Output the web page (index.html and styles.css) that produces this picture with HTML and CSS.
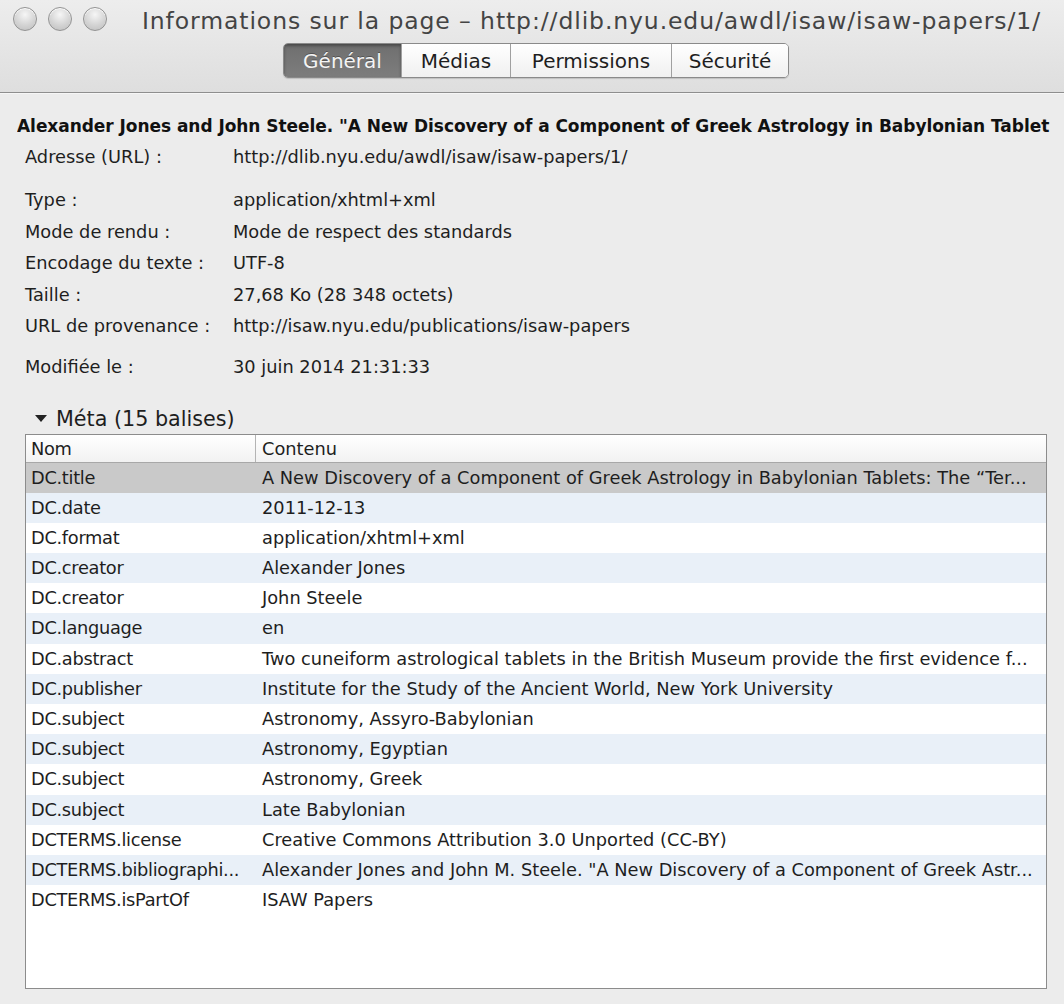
FILE: index.html
```html
<!DOCTYPE html>
<html lang="fr">
<head>
<meta charset="utf-8">
<title>Informations sur la page</title>
<link rel="stylesheet" href="styles.css">
</head>
<body>
<div class="window">
  <header class="titlebar">
    <div class="titlerow">
      <div class="lights">
        <span class="light"></span><span class="light"></span><span class="light"></span>
      </div>
      <div class="wintitle">Informations sur la page – http://dlib.nyu.edu/awdl/isaw/isaw-papers/1/</div>
    </div>
    <nav class="tabs">
      <span class="tab active">Général</span><span class="tab">Médias</span><span class="tab">Permissions</span><span class="tab">Sécurité</span>
    </nav>
  </header>
  <main class="content">
    <h1 class="pagetitle">Alexander Jones and John Steele. "A New Discovery of a Component of Greek Astrology in Babylonian Tablet</h1>
    <div class="info first">
      <span class="lbl">Adresse (URL) :</span><span class="val">http://dlib.nyu.edu/awdl/isaw/isaw-papers/1/</span>
    </div>
    <div class="info group">
      <span class="lbl">Type :</span><span class="val">application/xhtml+xml</span>
      <span class="lbl">Mode de rendu :</span><span class="val">Mode de respect des standards</span>
      <span class="lbl">Encodage du texte :</span><span class="val">UTF-8</span>
      <span class="lbl">Taille :</span><span class="val">27,68 Ko (28 348 octets)</span>
      <span class="lbl">URL de provenance :</span><span class="val">http://isaw.nyu.edu/publications/isaw-papers</span>
    </div>
    <div class="info last">
      <span class="lbl">Modifiée le :</span><span class="val">30 juin 2014 21:31:33</span>
    </div>
    <div class="meta-head"><span class="tri"></span>Méta (15 balises)</div>
    <div class="table">
      <div class="thead"><span class="th c1">Nom</span><span class="th c2">Contenu</span></div>
      <div class="tr sel"><span class="c1">DC.title</span><span class="c2">A New Discovery of a Component of Greek Astrology in Babylonian Tablets: The “Ter...</span></div>
      <div class="tr alt"><span class="c1">DC.date</span><span class="c2">2011-12-13</span></div>
      <div class="tr"><span class="c1">DC.format</span><span class="c2">application/xhtml+xml</span></div>
      <div class="tr alt"><span class="c1">DC.creator</span><span class="c2">Alexander Jones</span></div>
      <div class="tr"><span class="c1">DC.creator</span><span class="c2">John Steele</span></div>
      <div class="tr alt"><span class="c1">DC.language</span><span class="c2">en</span></div>
      <div class="tr"><span class="c1">DC.abstract</span><span class="c2">Two cuneiform astrological tablets in the British Museum provide the first evidence f...</span></div>
      <div class="tr alt"><span class="c1">DC.publisher</span><span class="c2">Institute for the Study of the Ancient World, New York University</span></div>
      <div class="tr"><span class="c1">DC.subject</span><span class="c2">Astronomy, Assyro-Babylonian</span></div>
      <div class="tr alt"><span class="c1">DC.subject</span><span class="c2">Astronomy, Egyptian</span></div>
      <div class="tr"><span class="c1">DC.subject</span><span class="c2">Astronomy, Greek</span></div>
      <div class="tr alt"><span class="c1">DC.subject</span><span class="c2">Late Babylonian</span></div>
      <div class="tr"><span class="c1">DCTERMS.license</span><span class="c2">Creative Commons Attribution 3.0 Unported (CC-BY)</span></div>
      <div class="tr alt"><span class="c1">DCTERMS.bibliographi...</span><span class="c2">Alexander Jones and John M. Steele. "A New Discovery of a Component of Greek Astr...</span></div>
      <div class="tr"><span class="c1">DCTERMS.isPartOf</span><span class="c2">ISAW Papers</span></div>
    </div>
  </main>
</div>
</body>
</html>
```

FILE: styles.css
```css
* { box-sizing: border-box; }
html, body { margin: 0; padding: 0; }
body {
  background: #ececec;
  font-family: "DejaVu Sans", "Liberation Sans", sans-serif;
  color: #1e1e1e;
  width: 1064px;
  height: 1004px;
  overflow: hidden;
}
.window { width: 1064px; height: 1004px; background: #ececec; }

.titlebar {
  height: 93px;
  background: linear-gradient(#ededed, #dedede);
  border-bottom: 1px solid #8e8e8e;
  box-shadow: 0 1px 0 #f6f6f6;
}
.titlerow { display: flex; align-items: center; height: 37px; padding-left: 13px; }
.lights { display: flex; gap: 11px; }
.light {
  width: 24px; height: 24px; border-radius: 50%;
  background: radial-gradient(circle at 50% 30%, #f6f6f6 0%, #d4d4d4 55%, #bcbcbc 100%);
  border: 1px solid #939393;
  box-shadow: inset 0 1px 1px #fff;
}
.wintitle {
  margin-left: 35px;
  font-size: 23.5px;
  color: #444;
  white-space: nowrap;
  letter-spacing: 0.9px;
  position: relative;
  top: 2px;
}
.tabs {
  display: flex;
  width: 506px;
  margin: 6px 0 0 283px;
  height: 35px;
  border: 1px solid #8a8a8a;
  border-radius: 5px;
  overflow: hidden;
  box-shadow: 0 1px 1px rgba(0,0,0,0.15);
}
.tab {
  display: flex; align-items: center; justify-content: center;
  font-size: 20px;
  color: #1e1e1e;
  background: linear-gradient(#ffffff, #f0f0f0);
  border-left: 1px solid #a0a0a0;
}
.tab:nth-child(1) { width: 117px; border-left: 0; }
.tab:nth-child(2) { width: 109px; }
.tab:nth-child(3) { width: 161px; }
.tab:nth-child(4) { flex: 1; }
.tab.active {
  background: linear-gradient(#6f6f6f, #7d7d7d);
  color: #f4f4f4;
  box-shadow: inset 0 2px 3px rgba(0,0,0,0.35);
  text-shadow: 0 -1px 0 rgba(0,0,0,0.3);
}

.content { padding: 21px 0 0 17px; }
.pagetitle {
  margin: 0;
  font-size: 17px;
  font-weight: bold;
  line-height: 24px;
  white-space: nowrap;
  overflow: hidden;
  letter-spacing: -0.05px;
  color: #111;
}
.info {
  display: grid;
  grid-template-columns: 208px auto;
  padding-left: 8px;
  font-size: 17.8px;
  line-height: 31.5px;
}
.info.first { margin-top: 3px; }
.info.group { margin-top: 11.5px; }
.info.last { margin-top: 9.5px; }
.lbl, .val { white-space: nowrap; }

.meta-head {
  display: flex; align-items: center;
  margin: 24px 0 0 18px;
  font-size: 20.7px;
  line-height: 24px;
  height: 24px;
}
.tri {
  width: 0; height: 0;
  border-left: 6px solid transparent;
  border-right: 6px solid transparent;
  border-top: 7px solid #222;
  margin-right: 9px;
}
.table {
  margin: 3px 0 0 8px;
  width: 1022px;
  height: 555px;
  background: #fff;
  border: 1px solid #8c8c8c;
  overflow: hidden;
}
.thead {
  display: flex;
  height: 28px;
  background: linear-gradient(#ffffff, #f2f2f2);
  border-bottom: 1px solid #a8a8a8;
  font-size: 17.8px;
  line-height: 27px;
}
.th.c1 { border-right: 1px solid #b4b4b4; }
.tr {
  display: flex;
  height: 30.2px;
  line-height: 30.2px;
  font-size: 17.8px;
}
.c1 { width: 230px; padding: 0 0 0 5px; white-space: nowrap; overflow: hidden; flex: none; letter-spacing: -0.3px; }
.c2 { flex: 1; padding: 0 12px 0 6px; white-space: nowrap; overflow: hidden; min-width: 0; }
.tr.alt { background: #e9f0f8; }
.tr.sel { background: #c9c9c9; }
```
